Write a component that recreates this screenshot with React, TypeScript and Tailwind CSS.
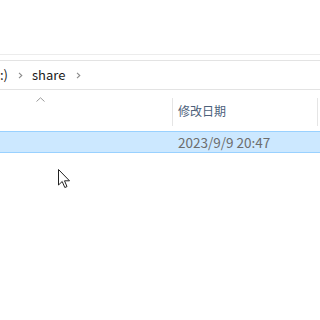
import React from "react";

function Chev() {
  return (
    <svg width="5" height="7" viewBox="0 0 5 7" className="shrink-0">
      <path d="M1 0.8 L3.8 3.5 L1 6.2" fill="none" stroke="#8a8a8a" strokeWidth="1.1" />
    </svg>
  );
}

export default function App() {
  const font = { fontFamily: '"Noto Sans CJK SC", "Noto Sans", sans-serif' };
  return (
    <div className="w-[320px] h-[320px] bg-white overflow-hidden relative" style={font}>
      <div className="h-[54px]" />
      <div className="h-px bg-[#ececec]" />
      <div className="h-[5px]" />
      <div className="h-[30px] border-y border-[#e3e3e3] flex items-center text-[13px] text-[#1a1a1a]">
        <span>:)</span>
        <span className="ml-[10px] mr-[9px] flex items-center"><Chev /></span>
        <span>share</span>
        <span className="ml-[11px] flex items-center"><Chev /></span>
      </div>
      <div className="flex h-[40px] relative">
        <div className="w-[172px] relative">
          <svg className="absolute left-[36px] top-[7px]" width="9" height="5" viewBox="0 0 9 5">
            <path d="M0.5 4.5 L4.5 0.8 L8.5 4.5" fill="none" stroke="#9a9a9a" strokeWidth="1" />
          </svg>
        </div>
        <div className="w-[145px] border-l border-[#e5e5e5] mt-[8px] h-[28px] pl-[5px] pt-[4px] text-[12px] text-[#4c607a]">
          修改日期
        </div>
        <div className="border-l border-[#e5e5e5] mt-[8px] h-[28px]" />
      </div>
      <div className="h-[1px]" />
      <div className="h-[22px] bg-[#cce8ff] border-y border-[#99d1ff] flex items-center">
        <span className="ml-[178px] text-[13.5px] text-[#6d6d6d]">2023/9/9 20:47</span>
      </div>
      <svg className="absolute left-[58px] top-[169px]" width="14" height="21" viewBox="0 0 14 21">
        <path d="M0.5 0.5 L0.5 16 L4.2 12.5 L6.8 18.5 L9 17.6 L6.5 11.8 L11.5 11.8 Z" fill="#fff" stroke="#222" strokeWidth="1" strokeLinejoin="miter" />
      </svg>
    </div>
  );
}
